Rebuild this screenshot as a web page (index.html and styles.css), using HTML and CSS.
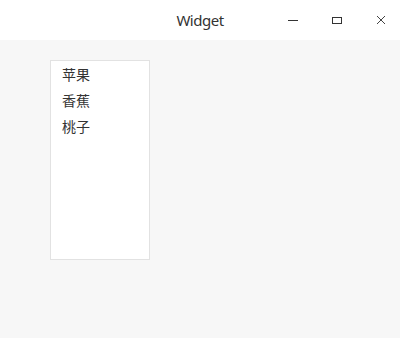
FILE: index.html
```html
<!DOCTYPE html>
<html lang="zh">
<head>
    <meta charset="UTF-8">
    <title>Widget</title>
    <link rel="stylesheet" href="styles.css">
</head>
<body>
    <div class="window">
        <div class="titlebar">
            <span class="title">Widget</span>
            <div class="controls">
                <span class="ctl">
                    <svg width="12" height="12" viewBox="0 0 12 12"><path d="M1 6.5h10" stroke="#333" stroke-width="1"/></svg>
                </span>
                <span class="ctl">
                    <svg width="12" height="12" viewBox="0 0 12 12"><rect x="1.5" y="3.5" width="9" height="6" fill="none" stroke="#333" stroke-width="1"/></svg>
                </span>
                <span class="ctl">
                    <svg width="12" height="12" viewBox="0 0 12 12"><path d="M2 2l8 8M10 2l-8 8" stroke="#444" stroke-width="1"/></svg>
                </span>
            </div>
        </div>
        <div class="content">
            <ul class="list">
                <li>苹果</li>
                <li>香蕉</li>
                <li>桃子</li>
            </ul>
        </div>
    </div>
</body>
</html>
```

FILE: styles.css
```css
* {
    margin: 0;
    padding: 0;
    box-sizing: border-box;
}

body {
    width: 400px;
    height: 340px;
    background: #fff;
    font-family: "Noto Sans", "Noto Sans CJK SC", sans-serif;
    color: #333;
    overflow: hidden;
}

.window {
    display: flex;
    flex-direction: column;
    height: 340px;
}

.titlebar {
    position: relative;
    height: 40px;
    display: flex;
    align-items: center;
    justify-content: center;
    background: #fff;
}

.title {
    font-size: 15px;
    letter-spacing: -0.5px;
    color: #333;
}

.controls {
    position: absolute;
    right: -3px;
    top: 0;
    height: 40px;
    display: flex;
}

.ctl {
    width: 44px;
    height: 40px;
    display: flex;
    align-items: center;
    justify-content: center;
}

.content {
    height: 298px;
    background: #f7f7f7;
    padding: 20px 50px;
}

.list {
    list-style: none;
    width: 100px;
    height: 200px;
    background: #fff;
    border: 1px solid #e2e2e2;
    padding: 0 11px;
}

.list li {
    height: 26px;
    line-height: 26px;
    font-family: "Noto Sans CJK SC", sans-serif;
    font-size: 14px;
    color: #333;
}
```
